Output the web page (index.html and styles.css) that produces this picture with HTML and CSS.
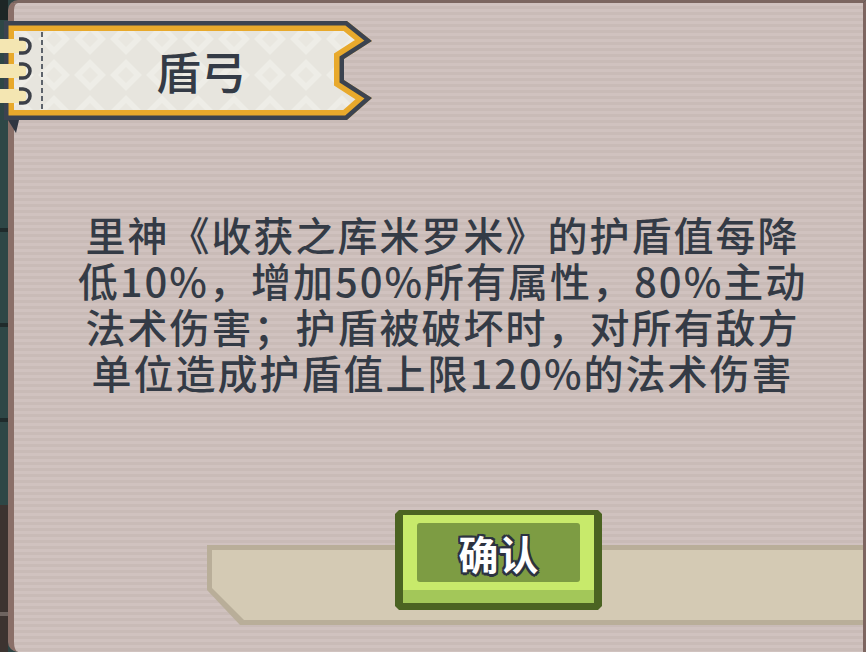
FILE: index.html
```html
<!DOCTYPE html>
<html lang="zh">
<head>
<meta charset="utf-8">
<title>盾弓</title>
<link rel="stylesheet" href="styles.css">
</head>
<body>
<div class="screen">
  <div class="side"></div>
  <div class="panel">
    <div class="banner">
      <svg class="banner-art" width="380" height="118" viewBox="0 0 380 118" aria-hidden="true">
        <defs>
          <pattern id="dia" width="36" height="36" patternUnits="userSpaceOnUse" x="0" y="3">
            <rect width="36" height="36" fill="#e7e5de"/>
            <polygon points="18,2 34,18 18,34 2,18" fill="#eeede7"/>
            <polygon points="18,10 26,18 18,26 10,18" fill="#e9e7e0"/>
          </pattern>
          <clipPath id="shape">
            <polygon points="4,3 347,3 372,23 344,41 344,62 372,80 347,102 4,102"/>
          </clipPath>
        </defs>
        <g clip-path="url(#shape)">
          <polygon points="4,3 347,3 372,23 344,41 344,62 372,80 347,102 4,102" fill="url(#dia)" stroke="#e8a92c" stroke-width="20" stroke-linejoin="miter"/>
          <polygon points="4,3 347,3 372,23 344,41 344,62 372,80 347,102 4,102" fill="none" stroke="#3b4350" stroke-width="9" stroke-linejoin="miter"/>
        </g>
        <polygon points="8,102 19,102 16,115" fill="#2f3641"/>
        <line x1="42" y1="14" x2="42" y2="92" stroke="#5d636b" stroke-width="2" stroke-dasharray="5 3"/>
        <g>
          <rect x="-4" y="21" width="30" height="14" rx="4" fill="#f4e6b2"/>
          <path d="M19 21 h4 a7 7 0 0 1 0 14 h-4" fill="none" stroke="#3c4048" stroke-width="3.5"/>
          <rect x="-4" y="46" width="30" height="14" rx="4" fill="#f4e6b2"/>
          <path d="M19 46 h4 a7 7 0 0 1 0 14 h-4" fill="none" stroke="#3c4048" stroke-width="3.5"/>
          <rect x="-4" y="71" width="30" height="14" rx="4" fill="#f4e6b2"/>
          <path d="M19 71 h4 a7 7 0 0 1 0 14 h-4" fill="none" stroke="#3c4048" stroke-width="3.5"/>
        </g>
      </svg>
      <h1 class="title">盾弓</h1>
    </div>
    <p class="desc">里神《收获之库米罗米》的护盾值每降<br>低10%，增加50%所有属性，80%主动<br>法术伤害；护盾被破坏时，对所有敌方<br>单位造成护盾值上限120%的法术伤害</p>
    <div class="footer">
      <div class="strip"><div class="strip-fill"></div></div>
      <button class="btn" type="button"><span class="btn-face"><span class="btn-label">确认</span></span></button>
    </div>
  </div>
</div>
</body>
</html>
```

FILE: styles.css
```css
html, body {
  margin: 0;
  padding: 0;
  height: 100%;
}
body {
  background: #2d4444;
  font-family: "Noto Sans CJK SC", "Noto Sans", sans-serif;
  overflow: hidden;
}
.screen {
  display: flex;
  height: 652px;
}
.side {
  width: 8px;
  flex: none;
  background: linear-gradient(180deg,
    #1d2626 0 20px,
    #2e4746 20px 228px, #1f2b2b 228px 232px,
    #2e4746 232px 323px, #1f2b2b 323px 327px,
    #2e4746 327px 418px, #1f2b2b 418px 422px,
    #2e4746 422px 505px, #3c3330 505px 612px,
    #6e6460 612px 616px, #3c3330 616px 652px);
}
.panel {
  flex: 1;
  display: flex;
  flex-direction: column;
  border-top: 3px solid #7b6660;
  border-left: 6px solid #8a6f68;
  border-right: 3px solid #7d6560;
  border-radius: 10px 0 0 10px;
  background: repeating-linear-gradient(180deg, #d0c2bf 0 3px, #c9bbb7 3px 6px);
  box-sizing: border-box;
  height: 652px;
}
.banner {
  display: grid;
  width: 380px;
  height: 118px;
  margin: 15px 0 0 -14px;
}
.banner-art {
  grid-area: 1 / 1;
  display: block;
}
.title {
  grid-area: 1 / 1;
  align-self: center;
  justify-self: start;
  margin: 0 0 14px 156px;
  font-size: 45px;
  line-height: 1;
  font-weight: 500;
  color: #343b46;
}
.desc {
  margin: 75px 0 0 0;
  padding-left: 8px;
  text-align: center;
  font-size: 40px;
  line-height: 46px;
  letter-spacing: 2px;
  font-weight: 500;
  color: #343b46;
}
.footer {
  display: grid;
  margin-top: 115px;
}
.strip {
  grid-area: 1 / 1;
  margin: 35px 0 0 193px;
  height: 80px;
  box-sizing: border-box;
  padding: 5px 0 5px 5px;
  background: #b9ae99;
  clip-path: polygon(0 0, 100% 0, 100% 100%, 33px 100%, 0 45px);
}
.strip-fill {
  height: 100%;
  background: #d4cab4;
  clip-path: polygon(0 0, 100% 0, 100% 100%, 32px 100%, 0 38px);
}
.btn {
  grid-area: 1 / 1;
  justify-self: start;
  align-self: start;
  margin: 0 0 0 381px;
  width: 207px;
  height: 100px;
  border: 0;
  padding: 5px 8px 7px 8px;
  box-sizing: border-box;
  background: #4b6322;
  clip-path: polygon(4px 0, calc(100% - 4px) 0, 100% 4px, 100% calc(100% - 4px), calc(100% - 4px) 100%, 4px 100%, 0 calc(100% - 4px), 0 4px);
  font-family: inherit;
  cursor: pointer;
}
.btn-face {
  display: flex;
  height: 100%;
  box-sizing: border-box;
  padding: 8px 14px 21px 14px;
  background: linear-gradient(180deg, #c8ea6b 0 calc(100% - 13px), #a3c759 calc(100% - 13px));
}
.btn-label {
  flex: 1;
  display: flex;
  align-items: center;
  justify-content: center;
  background: #7d9c43;
  border-radius: 3px;
  font-size: 40px;
  font-weight: 700;
  color: #ffffff;
  text-shadow:
    2px 0 0 #2c3240, -2px 0 0 #2c3240, 0 2px 0 #2c3240, 0 -2px 0 #2c3240,
    2px 2px 0 #2c3240, -2px 2px 0 #2c3240, 2px -2px 0 #2c3240, -2px -2px 0 #2c3240,
    0 3px 0 #2c3240;
}
```
